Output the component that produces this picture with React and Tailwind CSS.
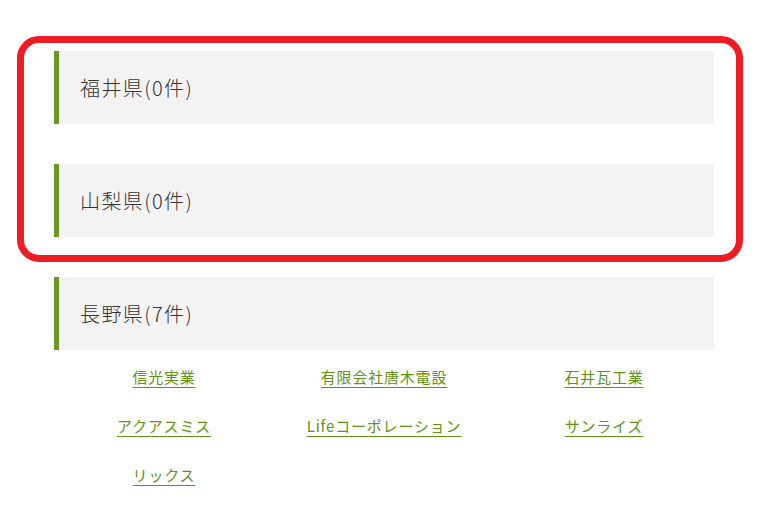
import React from 'react';

const prefectures = [
  { name: '福井県', count: 0, companies: [] },
  { name: '山梨県', count: 0, companies: [] },
  {
    name: '長野県',
    count: 7,
    companies: ['信光実業', '有限会社唐木電設', '石井瓦工業', 'アクアスミス', 'Lifeコーポレーション', 'サンライズ', 'リックス'],
  },
];

const font = { fontFamily: '"Noto Sans CJK JP", "Noto Sans", sans-serif' };

const App = () => {
  return (
    <div className="relative min-h-[531px] w-[781px] bg-white" style={font}>
      <div className="ml-[54px] w-[660px] pt-[51px] flex flex-col gap-[40px]">
        {prefectures.map((pref) => (
          <section key={pref.name}>
            <h2 className="h-[73px] flex items-center bg-[#f3f3f3] border-l-[5px] border-[#6a991f] pl-[21px] text-[20px] tracking-[1.4px] text-[#333333] font-light">
              {pref.name}({pref.count}件)
            </h2>
            {pref.companies.length > 0 && (
              <ul className="grid grid-cols-3 mt-[3px]">
                {pref.companies.map((c) => (
                  <li key={c} className="h-[49px] flex items-center justify-center">
                    <a href="#" className="text-[15px] tracking-[0.8px] text-[#5f9412] underline underline-offset-[4px]">
                      {c}
                    </a>
                  </li>
                ))}
              </ul>
            )}
          </section>
        ))}
      </div>

      {/* annotation highlight */}
      <div className="absolute left-[17px] top-[36px] w-[726px] h-[226px] border-[7px] border-[#ee1c25] rounded-[22px] pointer-events-none" />
    </div>
  );
};

export default App;
